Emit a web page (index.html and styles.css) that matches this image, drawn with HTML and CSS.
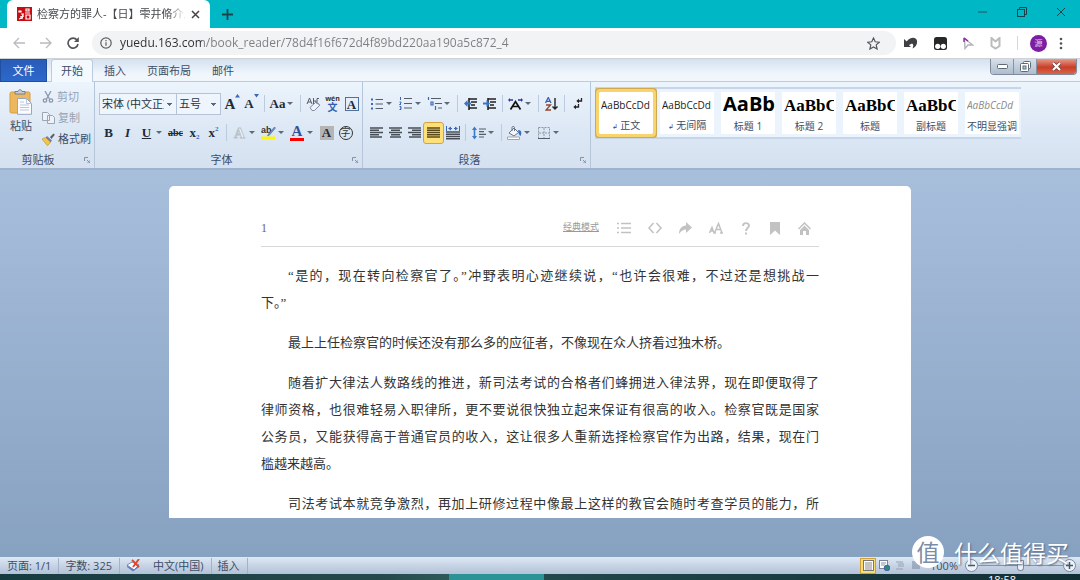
FILE: index.html
```html
<!DOCTYPE html>
<html lang="zh-CN">
<head>
<meta charset="utf-8">
<title>检察方的罪人</title>
<link rel="stylesheet" href="styles.css">
</head>
<body>
<header class="browser">
  <div class="tabstrip">
    <div class="browser-tab">
      <svg class="favicon" width="15" height="14" viewBox="0 0 15 14"><rect width="15" height="14" fill="#c90b12"/><path d="M2 4h2v1H2zM9 2h3v2H9zM8 6h5M4 7h3M3 10l4-1M6 7l-1 5M9 8h4v4H9zM2 12l3-1" stroke="#fff" stroke-width="1.2" fill="none"/></svg>
      <span class="browser-tab-title">检察方的罪人-【日】雫井脩介,乔</span>
      <button class="plain" aria-label="关闭标签页"><svg width="9" height="9" viewBox="0 0 9 9"><path d="M1 1l7 7M8 1l-7 7" stroke="#444" stroke-width="1.5"/></svg></button>
    </div>
    <button class="plain new-tab" aria-label="新标签页"><svg width="11" height="11" viewBox="0 0 11 11"><path d="M5.5 0v11M0 5.5h11" stroke="#1c454b" stroke-width="1.8"/></svg></button>
    <div class="window-controls">
      <button class="plain" aria-label="最小化"><svg width="10" height="10" viewBox="0 0 10 10"><path d="M0 5h9" stroke="#15555c"/></svg></button>
      <button class="plain" aria-label="还原"><svg width="10" height="10" viewBox="0 0 10 10" fill="none" stroke="#15434a"><rect x=".5" y="2.500" width="7" height="7"/><path d="M2.500 2V.5h7v7H8"/></svg></button>
      <button class="plain" aria-label="关闭"><svg width="10" height="10" viewBox="0 0 10 10"><path d="M1 1l8 8M9 1l-8 8" stroke="#15434a"/></svg></button>
    </div>
  </div>
  <div class="toolbar">
    <div class="nav">
      <button class="plain" aria-label="后退"><svg width="12" height="12" viewBox="0 0 12 12" fill="none" stroke="#b9bbbe" stroke-width="1.300"><path d="M12 6H1.500M6 1L1 6l5 5"/></svg></button>
      <button class="plain" aria-label="前进"><svg width="12" height="12" viewBox="0 0 12 12" fill="none" stroke="#b9bbbe" stroke-width="1.300"><path d="M0 6h10.500M6 1l5 5-5 5"/></svg></button>
      <button class="plain" aria-label="刷新"><svg width="12" height="12" viewBox="0 0 12 12"><path d="M10 3a5 5 0 1 0 1 4" fill="none" stroke="#505357" stroke-width="1.600"/><path d="M11.800 0v5H7z" fill="#505357"/></svg></button>
    </div>
    <div class="address">
      <svg width="12" height="12" viewBox="0 0 12 12"><circle cx="6" cy="6" r="5.200" fill="none" stroke="#5b5e62" stroke-width="1.200"/><path d="M6 5.300v3.500M6 3v1.300" stroke="#5b5e62" stroke-width="1.200"/></svg>
      <input class="url" aria-label="地址" value="yuedu.163.com/book_reader/78d4f16f672d4f89bd220aa190a5c872_4">
      <button class="plain" aria-label="收藏"><svg width="13" height="13" viewBox="0 0 13 13"><path d="M6.500 1l1.700 3.800 4.100.4-3.100 2.700.9 4.100-3.600-2.100L2.900 12l.9-4.100L.7 5.200l4.100-.4z" fill="none" stroke="#54575b" stroke-width="1.200"/></svg></button>
    </div>
    <div class="extensions">
      <button class="plain" aria-label="撤销扩展"><svg width="14" height="12" viewBox="0 0 14 12"><path d="M0 2v8h7L5 8.300C8 5.500 10.500 6.500 8.500 11.500 14.500 9 14.500 1 9.500.8 7 .7 4.500 2 2.800 4.500z" fill="#3f4043"/></svg></button>
      <button class="plain" aria-label="脚本管理"><svg width="13" height="13" viewBox="0 0 13 13"><rect width="13" height="13" rx="2.500" fill="#282828"/><circle cx="3.700" cy="9.300" r="2.600" fill="#fff"/><circle cx="9.300" cy="9.300" r="2.600" fill="#fff"/></svg></button>
      <button class="plain" aria-label="指针扩展"><svg width="11" height="13" viewBox="0 0 11 13"><path d="M1.500 1.500l8 6.500H5l-3 3.500z" fill="#fff" stroke="#b4b2bc" stroke-width="1.400"/><path d="M1 1l4 3M1 1v4" stroke="#8a2aa0" stroke-width="1.400"/></svg></button>
      <button class="plain" aria-label="安全扩展"><svg width="11" height="13" viewBox="0 0 11 13"><path d="M1.500 1v8l4 2.600 4-2.600V1l-4 3.500z" fill="none" stroke="#bcbcbc" stroke-width="2"/></svg></button>
      <span class="ext-divider"></span>
      <button class="avatar" aria-label="账户">源</button>
      <button class="plain" aria-label="菜单"><svg width="4" height="13" viewBox="0 0 4 13" fill="#505357"><circle cx="2" cy="2" r="1.300"/><circle cx="2" cy="6.500" r="1.300"/><circle cx="2" cy="11" r="1.300"/></svg></button>
    </div>
  </div>
</header>

<nav class="ribbon-tabs">
  <button class="rtab file">文件</button>
  <button class="rtab active">开始</button>
  <button class="rtab">插入</button>
  <button class="rtab wide">页面布局</button>
  <button class="rtab">邮件</button>
  <div class="doc-controls">
    <button aria-label="最小化"><svg width="11" height="6" viewBox="0 0 11 6"><rect x=".5" y=".5" width="10" height="4" rx="1" fill="#fff" stroke="#5d6878"/></svg></button>
    <button aria-label="还原"><svg width="11" height="11" viewBox="0 0 11 11" fill="#fff" stroke="#5d6878"><rect x="3.500" y=".5" width="7" height="7" rx="1"/><rect x=".5" y="2.500" width="8" height="8" rx="1"/><rect x="3" y="5" width="3" height="3" fill="#b8c6d8"/></svg></button>
    <button class="doc-close" aria-label="关闭"><svg width="11" height="9" viewBox="0 0 11 9"><path d="M2 1l7 7M9 1L2 8" stroke="#6e3a3a" stroke-width="3.600"/><path d="M2 1l7 7M9 1L2 8" stroke="#fff" stroke-width="2.200"/></svg></button>
  </div>
</nav>

<section class="ribbon">
  <div class="group clipboard">
    <div class="clip-body">
      <button class="paste">
        <svg width="24" height="26" viewBox="0 0 24 26"><rect x="1" y="3" width="20" height="21" rx="1.500" fill="#edb85d" stroke="#d59b45"/><path d="M6 5V2.500h3C9.300.2 12.700.2 13 2.500h3V5z" fill="#c9ced5" stroke="#777f8b"/><path d="M8.500 9.500h9l5 5v10.800h-14z" fill="#fbfcff" stroke="#98a6c0"/><path d="M17.500 9.500v5h5M11 13h4M11 16h9M11 18.500h9M11 21h9" stroke="#b9c5da" fill="none"/></svg>
        <span>粘贴</span><i class="caret"></i>
      </button>
      <div class="clip-list">
        <button class="muted"><svg width="12" height="12" viewBox="0 0 12 12" fill="none" stroke="#8c98aa" stroke-width="1.300"><path d="M3 0l4.500 8M9 0L4.500 8"/><circle cx="3" cy="9.500" r="1.700"/><circle cx="9" cy="9.500" r="1.700"/></svg>剪切</button>
        <button class="muted"><svg width="13" height="12" viewBox="0 0 13 12" fill="#eef1f6" stroke="#9aa5b6"><path d="M.5.5h5l2 2v6h-7zM5.500 3.500h5l2 2v6h-7z"/></svg>复制</button>
        <button><svg width="13" height="13" viewBox="0 0 13 13"><path d="M8 4l3.500-3.500 1.300 1.300L9.500 6z" fill="#5b5b6c"/><path d="M5 3l5 4.500-1.500 2L3.500 5z" fill="#6d7fb0"/><path d="M0 6l3.500-1.500 5 4.700-3 3.500z" fill="#f1c74a" stroke="#b98d24" stroke-width=".6"/></svg>格式刷</button>
      </div>
    </div>
    <div class="group-name">剪贴板<button class="launcher" aria-label="剪贴板选项"><svg width="6" height="6" viewBox="0 0 6 6"><path d="M.5 4V.5H4M3 3l3 3M6 3v3H3" fill="none" stroke="#8492a6"/></svg></button></div>
  </div>

  <div class="group font">
    <div class="tools">
      <select class="font-family" aria-label="字体"><option>宋体 (中文正文)</option></select>
      <select class="font-size" aria-label="字号"><option>五号</option></select>
      <button class="tool serif" aria-label="增大字号">A<svg width="5" height="10" viewBox="0 0 5 10"><path d="M0 3.500L2.500 0 5 3.500z" fill="#3c66b8"/></svg></button>
      <button class="tool serif small" aria-label="缩小字号">A<svg width="5" height="10" viewBox="0 0 5 10"><path d="M0 0h5L2.500 3.500z" fill="#3c66b8"/></svg></button>
      <i class="sep"></i>
      <button class="tool drop serif small" aria-label="更改大小写"><span class="ico">Aa</span><i class="caret"></i></button>
      <i class="sep"></i>
      <button class="tool" aria-label="清除格式"><svg width="15" height="14" viewBox="0 0 15 14"><path d="M1 7l2.500-6L6 7M2 5h3M7.500 1v6H10V4H7.500M13 1.500h-2V7h2" fill="none" stroke="#555e6c"/><path d="M4 10.500l5.500-5 4.500 2.500-5.500 5.500H6z" fill="#eff3fa" stroke="#7f8ba2"/></svg></button>
      <button class="tool pinyin" aria-label="拼音指南"><small>wén</small><span>文</span></button>
      <button class="tool" aria-label="字符边框"><span class="boxed">A</span></button>
    </div>
    <div class="tools">
      <button class="tool serif small" aria-label="加粗">B</button>
      <button class="tool serif small" aria-label="倾斜"><em>I</em></button>
      <button class="tool drop serif small" aria-label="下划线"><u class="ico">U</u><i class="caret"></i></button>
      <button class="tool serif tiny" aria-label="删除线"><s>abc</s></button>
      <button class="tool serif small" aria-label="下标">x<sub>2</sub></button>
      <button class="tool serif small" aria-label="上标">x<sup>2</sup></button>
      <i class="sep"></i>
      <button class="tool drop serif outline" aria-label="文本效果"><span class="ico">A</span><i class="caret"></i></button>
      <button class="tool drop" aria-label="突出显示"><span class="ico"><svg width="15" height="15" viewBox="0 0 15 15"><text x="0" y="8" font-family="Liberation Sans" font-size="9" font-weight="bold" fill="#333">ab</text><path d="M13.500 2L7.500 9l-1 2 2-1L14.500 3z" fill="#7795cd" stroke="#41609c" stroke-width=".6"/><path d="M0 13h14" stroke="#fdf600" stroke-width="3"/></svg></span><i class="caret"></i></button>
      <button class="tool drop color" aria-label="字体颜色"><span class="ico">A</span><i class="caret"></i></button>
      <button class="tool" aria-label="字符底纹"><span class="shaded">A</span></button>
      <button class="tool" aria-label="带圈字符"><span class="ringed">字</span></button>
    </div>
    <div class="group-name">字体<button class="launcher" aria-label="字体选项"><svg width="6" height="6" viewBox="0 0 6 6"><path d="M.5 4V.5H4M3 3l3 3M6 3v3H3" fill="none" stroke="#8492a6"/></svg></button></div>
  </div>

  <div class="group para">
    <div class="tools">
      <button class="tool drop" aria-label="项目符号"><span class="ico"><svg width="12" height="12" viewBox="0 0 12 12"><path d="M0 1.500h2M0 6h2M0 10.500h2" stroke="#3c66b8" stroke-width="2"/><path d="M4.500 1.500H12M4.500 6H12M4.500 10.500H12" stroke="#555d68" stroke-width="1.200"/></svg></span><i class="caret"></i></button>
      <button class="tool drop" aria-label="编号"><span class="ico"><svg width="13" height="13" viewBox="0 0 13 13"><path d="M1.500 0v3M.5 5h1.500v1L.5 7.500H2M.5 9.500H2v3H.5M1 11h1" fill="none" stroke="#3c66b8"/><path d="M5 1.500h8M5 6.500h8M5 11h8" stroke="#555d68" stroke-width="1.200"/></svg></span><i class="caret"></i></button>
      <button class="tool drop" aria-label="多级列表"><span class="ico"><svg width="15" height="14" viewBox="0 0 15 14"><path d="M1.500 0v3M4 5h2v3H4zM8.500 9v4" fill="none" stroke="#3c66b8" stroke-width="1.200"/><path d="M4 1.500h10M8 6.500h7M11 11h4" stroke="#555d68" stroke-width="1.200"/></svg></span><i class="caret"></i></button>
      <i class="sep"></i>
      <button class="tool" aria-label="减少缩进"><svg width="13" height="12" viewBox="0 0 13 12"><path d="M5 1h8M7 4h6M7 7h4M5 10h8M5 0v12" stroke="#222" stroke-width="1.600"/><path d="M0 5.500L3.500 2v2.500H7v2H3.500V9z" fill="#3773c8"/></svg></button>
      <button class="tool" aria-label="增加缩进"><svg width="13" height="12" viewBox="0 0 13 12"><path d="M5 1h8M7 4h6M7 7h4M5 10h8M5 0v12" stroke="#222" stroke-width="1.600"/><path d="M7 5.500L3.500 2v2.500H0v2h3.500V9z" fill="#3773c8"/></svg></button>
      <i class="sep"></i>
      <button class="tool drop" aria-label="中文版式"><span class="ico"><svg width="15" height="12" viewBox="0 0 15 12"><path d="M2.500 11.500l5-8 5 8M4.500 8.500h6" fill="none" stroke="#111" stroke-width="1.700"/><path d="M0 2l2-2v1.300h3v1.400H2V4zM15 2l-2-2v1.300h-3v1.400h3V4z" fill="#2c35a5"/></svg></span><i class="caret"></i></button>
      <i class="sep"></i>
      <button class="tool" aria-label="排序"><svg width="13" height="14" viewBox="0 0 13 14"><path d="M.5 6L3.300.5 6 6M1.500 4.300h3.600" fill="none" stroke="#3b62ae" stroke-width="1.300"/><path d="M1 8h4.500L1 13h5" fill="none" stroke="#94442f" stroke-width="1.300"/><path d="M10 1v11M7.500 9.500L10 12l2.500-2.500" fill="none" stroke="#222" stroke-width="1.400"/></svg></button>
      <i class="sep"></i>
      <button class="tool" aria-label="显示编辑标记"><svg width="10" height="12" viewBox="0 0 10 12"><path d="M8.500 0v3H5M5.500 6v3H2" fill="none" stroke="#222" stroke-width="1.300"/><path d="M6 .8v4.400L3.300 3zM3 6.800v4.400L.3 9z" fill="#222"/></svg></button>
    </div>
    <div class="tools">
      <button class="tool" aria-label="左对齐"><svg width="13" height="11" viewBox="0 0 13 11"><path d="M0 1h13M0 3.200h9M0 5.500h13M0 7.700h9M0 10h12" stroke="#474d56" stroke-width="1.400"/></svg></button>
      <button class="tool" aria-label="居中"><svg width="13" height="11" viewBox="0 0 13 11"><path d="M0 1h13M2 3.200h9M0 5.500h13M2 7.700h9M1 10h11" stroke="#474d56" stroke-width="1.400"/></svg></button>
      <button class="tool" aria-label="右对齐"><svg width="13" height="11" viewBox="0 0 13 11"><path d="M0 1h13M4 3.200h9M0 5.500h13M4 7.700h9M1 10h12" stroke="#474d56" stroke-width="1.400"/></svg></button>
      <button class="tool selected" aria-label="两端对齐"><svg width="13" height="11" viewBox="0 0 13 11"><path d="M0 1h13M0 3.200h13M0 5.500h13M0 7.700h13M0 10h13" stroke="#5a4a1a" stroke-width="1.400"/></svg></button>
      <button class="tool" aria-label="分散对齐"><svg width="14" height="14" viewBox="0 0 14 14"><path d="M.5 0v5M13.500 0v5M3 2.500h3M8 2.500h3" stroke="#3c66b8"/><path d="M2 2.500L5 .5v4zM12 2.500L9 .5v4z" fill="#3c66b8"/><path d="M0 6h14M0 8.200h14M0 10.500h14M0 12.700h14" stroke="#474d56" stroke-width="1.400"/></svg></button>
      <i class="sep"></i>
      <button class="tool drop" aria-label="行距"><span class="ico"><svg width="14" height="14" viewBox="0 0 14 14"><path d="M0 4L2.500.5 5 4H3.300v6H5l-2.500 3.500L0 10h1.700V4z" fill="#3c78cb"/><path d="M7 3h7M7 5.700h5M7 8.400h7M7 11h5" stroke="#555d68" stroke-width="1.200"/></svg></span><i class="caret"></i></button>
      <i class="sep"></i>
      <button class="tool drop" aria-label="底纹"><span class="ico"><svg width="15" height="14" viewBox="0 0 15 14"><path d="M2 7l5-5 4.500 4.500L7 10z" fill="#f3f6fb" stroke="#68758b"/><path d="M5 5V1.500C5 0 7.500 0 7.500 1.500V5" fill="none" stroke="#68758b"/><path d="M11 4c3.500 0 4 3 2.500 6-1.500-.5-2-3-2.500-6z" fill="#376cc0"/><path d="M.5 11h12v2.500H.5z" fill="#fff" stroke="#9ca6b4"/></svg></span><i class="caret"></i></button>
      <button class="tool drop" aria-label="边框"><span class="ico"><svg width="12" height="12" viewBox="0 0 12 12" fill="none" stroke="#8e97a4"><path d="M.5.5h11v11H.5zM6 1v10M1 6h10" stroke-dasharray="2 1"/><path d="M0 11.500h12" stroke="#555d68"/></svg></span><i class="caret"></i></button>
    </div>
    <div class="group-name">段落<button class="launcher" aria-label="段落选项"><svg width="6" height="6" viewBox="0 0 6 6"><path d="M.5 4V.5H4M3 3l3 3M6 3v3H3" fill="none" stroke="#8492a6"/></svg></button></div>
  </div>

  <div class="group styles">
    <div class="gallery">
      <button class="style chosen"><span class="sample">AaBbCcDd</span><span class="label"><small>↲</small> 正文</span></button>
      <button class="style"><span class="sample">AaBbCcDd</span><span class="label"><small>↲</small> 无间隔</span></button>
      <button class="style"><span class="sample h1">AaBb</span><span class="label">标题 1</span></button>
      <button class="style"><span class="sample h2">AaBbC</span><span class="label">标题 2</span></button>
      <button class="style"><span class="sample h2">AaBbC</span><span class="label">标题</span></button>
      <button class="style"><span class="sample h2">AaBbC</span><span class="label">副标题</span></button>
      <button class="style"><span class="sample faint">AaBbCcDd</span><span class="label">不明显强调</span></button>
    </div>
  </div>
</section>

<main class="desk">
  <article class="sheet">
    <header class="sheet-head">
      <span class="page-no">1</span>
      <a class="mode" href="#">经典模式</a>
      <div class="sheet-tools">
        <button class="plain" aria-label="目录"><svg width="14" height="12" viewBox="0 0 14 12"><path d="M0 1.500h2M0 6h2M0 10.500h2M4 1.500h10M4 6h10M4 10.500h10" stroke="#c2c2c2" stroke-width="1.500"/></svg></button>
        <button class="plain" aria-label="代码"><svg width="14" height="12" viewBox="0 0 14 12"><path d="M5.500 1L1 6l4.500 5M8.500 1L13 6l-4.500 5" fill="none" stroke="#c2c2c2" stroke-width="1.600"/></svg></button>
        <button class="plain" aria-label="分享"><svg width="13" height="12" viewBox="0 0 13 12"><path d="M7 0l6 5.500L7 11V7.500C4 7.500 2 9 0 12c0-5 2.500-8 7-8.500z" fill="#c2c2c2"/></svg></button>
        <button class="plain" aria-label="字体大小"><svg width="14" height="12" viewBox="0 0 14 12"><path d="M5.500 11L9.500 1.500 13 11M7 7.500h5M.5 11L3 5.500 5 11M1.500 9h3M4.500 11h2.500M11 11h3" fill="none" stroke="#c2c2c2" stroke-width="1.500"/></svg></button>
        <button class="plain" aria-label="帮助"><svg width="8" height="13" viewBox="0 0 8 13"><path d="M1 4C1 .2 7 .2 7 3.500 7 6 4 6 4 9M4 10.500v2" fill="none" stroke="#c2c2c2" stroke-width="1.900"/></svg></button>
        <button class="plain" aria-label="书签"><svg width="10" height="13" viewBox="0 0 10 13"><path d="M0 0h10v13L5 8.500 0 13z" fill="#c2c2c2"/></svg></button>
        <button class="plain" aria-label="首页"><svg width="13" height="13" viewBox="0 0 13 13"><path d="M.5 7l6-6 6 6" fill="none" stroke="#c2c2c2" stroke-width="1.500"/><path d="M2 8l4.500-4.500L11 8v5H8V9H5v4H2z" fill="#c2c2c2"/></svg></button>
      </div>
    </header>
    <div class="prose">
      <p><span class="full">“是的，现在转向检察官了。”冲野表明心迹继续说，“也许会很难，不过还是想挑战一</span><span>下。”</span></p>
      <p><span>最上上任检察官的时候还没有那么多的应征者，不像现在众人挤着过独木桥。</span></p>
      <p><span class="full">随着扩大律法人数路线的推进，新司法考试的合格者们蜂拥进入律法界，现在即便取得了</span><span class="full">律师资格，也很难轻易入职律所，更不要说很快独立起来保证有很高的收入。检察官既是国家</span><span class="full">公务员，又能获得高于普通官员的收入，这让很多人重新选择检察官作为出路，结果，现在门</span><span>槛越来越高。</span></p>
      <p><span class="full">司法考试本就竞争激烈，再加上研修过程中像最上这样的教官会随时考查学员的能力，所</span></p>
    </div>
  </article>
</main>

<footer class="bottom">
  <div class="status">
    <span class="cell">页面: 1/1</span>
    <span class="cell">字数: 325</span>
    <span class="cell lang"><svg width="15" height="13" viewBox="0 0 15 13"><path d="M1 6l5-3 7 3-5 5z" fill="#f8faff" stroke="#7b8fb8"/><path d="M1 6.500V8l6 4.500L13 8V6L8 10.500z" fill="#5d80c4"/><path d="M6 1l7 7M13 0L7 8" stroke="#e2472f" stroke-width="1.900"/></svg>中文(中国)</span>
    <span class="cell">插入</span>
    <div class="views">
      <button class="view on" aria-label="页面视图"><svg width="11" height="11" viewBox="0 0 11 11"><rect x=".5" y=".5" width="10" height="10" fill="#fff" stroke="#777"/><path d="M2 3h7M2 5h7M2 7h7M2 9h7" stroke="#888"/></svg></button>
      <button class="view" aria-label="Web 视图"><svg width="11" height="11" viewBox="0 0 11 11"><rect x=".5" y=".5" width="8" height="8" fill="#fff" stroke="#78859a"/><path d="M2 3h5M2 5h4" stroke="#8693a8"/><circle cx="8" cy="8" r="2.800" fill="#36876d" stroke="#386bb0"/></svg></button>
      <button class="view" aria-label="大纲视图"><svg width="11" height="11" viewBox="0 0 11 11"><path d="M1 2h7M3 4h6M3 6h6M1 9h7" stroke="#96a2b4"/></svg></button>
      <button class="view" aria-label="草稿视图"><svg width="11" height="11" viewBox="0 0 11 11"><path d="M1 2h8M1 4h8M1 6h8M1 8h8" stroke="#77859b"/></svg></button>
      <label class="percent" for="zoom">100%</label>
      <button class="round" aria-label="缩小"><svg width="7" height="7" viewBox="0 0 7 7"><path d="M0 3.500h7" stroke="#46546a" stroke-width="1.500"/></svg></button>
      <input class="zoom" id="zoom" type="range" min="0" max="100" value="50">
      <button class="round" aria-label="放大"><svg width="7" height="7" viewBox="0 0 7 7"><path d="M0 3.500h7M3.500 0v7" stroke="#46546a" stroke-width="1.500"/></svg></button>
    </div>
  </div>
  <div class="taskbar"><span class="task-active"></span><time class="clock">18:58</time></div>
</footer>
<div class="watermark"><span class="seal">值</span><span>什么值得买</span></div>
</body>
</html>
```
FILE: styles.css
```css
* { box-sizing: border-box; }
body {
  margin: 0;
  height: 100vh;
  display: flex;
  flex-direction: column;
  overflow: hidden;
  font: 11px/16px "Open Sans", "Noto Sans CJK SC", sans-serif;
  color: #3c4d66;
}
button { border: 0; padding: 0; margin: 0; background: none; font: inherit; color: inherit; }
svg { display: block; flex: none; }
.plain { display: flex; align-items: center; justify-content: center; }

/* Browser chrome */
.tabstrip { display: flex; align-items: center; height: 28px; background: #00b7c5; }
.browser-tab {
  display: flex; align-items: center; gap: 5px;
  width: 203px; height: 28px; margin-left: 7px; padding: 0 10px;
  background: #fff; border-radius: 6px 6px 0 0; color: #45494d;
}
.browser-tab-title {
  flex: 1; overflow: hidden; white-space: nowrap;
  mask-image: linear-gradient(90deg, #000 88%, transparent);
}
.new-tab { margin-left: 12px; }
.window-controls { display: flex; gap: 29px; margin-left: auto; padding: 0 14px 4px 0; }
.toolbar {
  display: flex; align-items: center; height: 31px; padding-right: 17px;
  background: #fff; border-bottom: 1px solid #cfd3d8;
}
.nav { display: flex; gap: 15px; padding: 0 13px; }
.address {
  flex: 1; display: flex; align-items: center; gap: 8px;
  height: 24px; padding: 0 16px 0 8px; border-radius: 12px; background: #f1f3f4;
}
.url {
  flex: 1; min-width: 0; border: 0; padding: 0; height: 20px;
  font: 12px/20px "Open Sans", sans-serif; color: transparent;
  background: linear-gradient(90deg, #2c2e31 82px, #7b7e82 82px);
  background-clip: text; -webkit-background-clip: text;
}
.extensions { display: flex; align-items: center; gap: 16px; margin-left: -5px; padding-left: 13px; }
.ext-divider { width: 1px; height: 14px; background: #d5d7da; }
.avatar { width: 17px; height: 17px; margin: 0 -4px; border-radius: 50%; background: #7b1fa2; color: #e7d3ef; font-size: 8px; line-height: 16px; }

/* Ribbon tabs */
.ribbon-tabs {
  display: flex; align-items: flex-end; height: 23px;
  background: linear-gradient(#d3e1f0, #f1f6fc 70%); border-bottom: 1px solid #bccbe0;
}
.rtab { width: 44px; height: 23px; margin-bottom: -1px; }
.rtab.wide { width: 64px; }
.rtab.file { width: 47px; background: linear-gradient(#2a5cb8, #2c68cc); color: #fff; border: 1px solid #1f4f9f; }
.rtab.active { width: 42px; margin-left: 4px; background: #f4f9fe; border: 1px solid #bccbe0; border-bottom: 0; border-radius: 3px 3px 0 0; }
.doc-controls { display: flex; align-self: flex-start; margin: 0 3px 0 auto; border: 1px solid #7f8b9b; border-top: 0; border-radius: 0 0 4px 4px; overflow: hidden; }
.doc-controls button { display: flex; align-items: center; justify-content: center; width: 23px; height: 15px; background: linear-gradient(#d7e0ea, #aebccd); border-right: 1px solid #8793a4; }
.doc-controls .doc-close { width: 39px; background: linear-gradient(#e79a8c, #c93f26 55%, #d8654a); border: 0; }

/* Ribbon */
.ribbon { display: flex; height: 88px; background: linear-gradient(#ecf4fc, #dbe7f4 60%, #d5e1f0); border-bottom: 2px solid #9fb2cb; }
.group { display: flex; flex-direction: column; border-right: 1px solid #b5c5da; }
.clipboard { width: 95px; }
.font { width: 268px; padding: 7px 0 0 4px; }
.para { width: 228px; padding: 7px 0 0 4px; }
.styles { padding: 5px 0 0 4px; border: 0; }
.group-name { position: relative; margin-top: auto; padding: 0 18px 0 0; text-align: center; }
.launcher { position: absolute; right: 4px; top: 5px; }
.caret { flex: none; border: 3px solid transparent; border-top-color: #5d6878; border-bottom: 0; }
.clip-body { display: flex; gap: 5px; padding: 7px 0 0 5px; }
.paste { display: flex; flex-direction: column; align-items: center; width: 32px; gap: 3px; }
.paste .caret { margin-top: 1px; }
.clip-list { display: flex; flex-direction: column; gap: 5px; }
.clip-list button { display: flex; align-items: center; gap: 3px; }
.muted { color: #96a2b3; }

.tools { display: flex; align-items: center; height: 29px; }
.tool { display: flex; align-items: center; justify-content: center; width: 19px; height: 20px; flex: none; }
.tool.drop { width: 29px; }
.ico { display: flex; justify-content: center; width: 19px; }
.drop .caret { margin-right: 4px; }
.sep { width: 1px; height: 17px; margin: 0 3px; background: #bccadd; flex: none; }
.serif { font: bold 15px/18px "Liberation Serif", serif; color: #222b38; }
.serif.small { font-size: 13px; }
.serif.tiny { font-size: 10px; }
.serif svg { align-self: flex-start; }
.serif sub, .serif sup { font-size: 7px; line-height: 7px; color: #3c66b8; }
.serif sub { align-self: flex-end; margin-bottom: 2px; }
.serif sup { align-self: flex-start; margin-top: 3px; }
.outline { color: #f6f9fd; -webkit-text-stroke: 1px #b9c2cd; }
.color .ico { height: 16px; width: 14px; margin: 0 3px 0 2px; border-bottom: 3px solid #f00; font: bold 15px/13px "Liberation Serif", serif; color: #33549b; }
.boxed, .shaded { width: 14px; height: 14px; font: bold 13px/13px "Liberation Serif", serif; color: #222b38; text-align: center; }
.boxed { border: 1px solid #50709f; }
.shaded { background: #b5b5b5; }
.ringed { width: 14px; height: 14px; border: 1px solid #333; border-radius: 50%; font-size: 10px; line-height: 11px; color: #333; text-align: center; }
.pinyin { flex-direction: column; color: #3460b4; font-weight: bold; }
.pinyin small { font-size: 7px; line-height: 6px; color: #333; }
.pinyin span { line-height: 10px; font-size: 10px; }
.selected { background: #fde07a; outline: 1px solid #d5a23c; border-radius: 2px; }
select { appearance: none; height: 22px; padding: 0 12px 0 2px; border: 1px solid #b3c3da; border-radius: 0; font: inherit; color: #2a3547; background: linear-gradient(#5d6878, #5d6878) no-repeat right 4px top 9px / 5px 1px, linear-gradient(#5d6878, #5d6878) no-repeat right 5px top 10px / 3px 1px, linear-gradient(#5d6878, #5d6878) no-repeat right 6px top 11px / 1px 1px, #eef5fc; }
.font-family { width: 78px; }
.font-size { width: 45px; margin-left: -1px; margin-right: 2px; }

.gallery { display: flex; width: 426px; height: 52px; padding: 3px 0 0 4px; gap: 7px; border: 1px solid #c6d5e8; border-width: 2px 0; background: #ebf4fd; }
.style { display: flex; flex-direction: column; justify-content: space-between; width: 54px; height: 42px; flex: none; background: #fff; }
.chosen { outline: 3px solid #f7d56c; border-radius: 1px; box-shadow: 0 0 0 4px #d0a850; }
.sample { width: 52px; height: 26px; margin-left: 2px; overflow: hidden; text-align: left; font-size: 10px; line-height: 26px; color: #222; white-space: nowrap; }
.sample.h1 { font: bold 20px/24px "Open Sans", sans-serif; color: #000; }
.sample.h2 { font: bold 17px/27px "Liberation Serif", serif; color: #000; width: 50px; }
.sample.faint { font-style: italic; color: #8a8a8a; }
.label { width: 54px; text-align: center; font-size: 10px; line-height: 15px; white-space: nowrap; }
.label small { font-size: 7px; }

/* Document */
.desk { flex: 1; min-height: 0; display: flex; justify-content: center; padding: 16px 16px 39px; background: linear-gradient(#a8bfdc, #87a1c1); }
.sheet { width: 100%; max-width: 742px; padding: 0 92px; overflow: hidden; background: #fff; border-radius: 5px 5px 0 0; }
.sheet-head { display: flex; align-items: center; height: 61px; padding: 24px 8px 0 0; border-bottom: 1px solid #d8d8d8; }
.page-no { font: 12px/16px "Liberation Serif", serif; color: #666; }
.mode { margin: 0 18px 2px auto; font-size: 9px; color: #999; }
.sheet-tools { display: flex; align-items: center; gap: 17px; }
.sheet-tools button { min-width: 12px; }
.prose { padding-top: 15px; font: 13px/27px "Liberation Serif", "Noto Sans CJK SC", serif; color: #333; }
.prose p { margin: 0 0 13px; }
.prose span { display: block; white-space: nowrap; }
.prose span:first-child { text-indent: 27px; }
.full { text-align: justify; text-align-last: justify; }

/* Status and task bars */
.status { display: flex; align-items: center; height: 17px; padding-left: 7px; background: linear-gradient(#dfe9f5, #c7d4e5 50%, #b3c2d8); }
.cell { display: flex; align-items: center; gap: 12px; padding-right: 7px; margin-right: 6px; border-right: 1px solid #a3b2c9; }
.views { display: flex; align-items: center; margin-left: auto; padding-right: 4px; }
.view { display: flex; align-items: center; justify-content: center; width: 16px; height: 16px; }
.view.on { background: #fbdc74; border: 1px solid #d2a038; }
.percent { margin: 0 7px 0 6px; }
.round { display: flex; align-items: center; justify-content: center; width: 13px; height: 13px; border: 1px solid #7788a2; border-radius: 50%; background: #eef3fa; }
.zoom { width: 85px; height: 14px; margin: 0; appearance: none; background: linear-gradient(#8394ad, #8394ad) center / 100% 1px no-repeat; }
.zoom::-webkit-slider-thumb { appearance: none; width: 7px; height: 11px; border: 1px solid #7788a2; border-radius: 1px 1px 4px 4px; background: #eef3fa; }
.taskbar { display: grid; grid-template-columns: 449fr 95fr 536fr; height: 6px; overflow: hidden; background: linear-gradient(90deg, #173c40, #26494b 35%, #2e5a5a 42%, #21484a 51%, #102f35); }
.task-active { grid-column: 2; background: #2b9296; }
.clock { margin-left: auto; padding-right: 64px; color: #fff; line-height: 12px; }

.watermark { position: absolute; right: 11px; bottom: 11px; display: flex; align-items: center; gap: 10px; font: 23px/34px "Noto Sans CJK SC", sans-serif; color: #fff; text-shadow: 1px 1px 2px #55677f; }
.seal { width: 32px; height: 32px; border-radius: 50%; background: #fff; color: #7a8ca7; line-height: 30px; text-align: center; text-shadow: none; }
```
